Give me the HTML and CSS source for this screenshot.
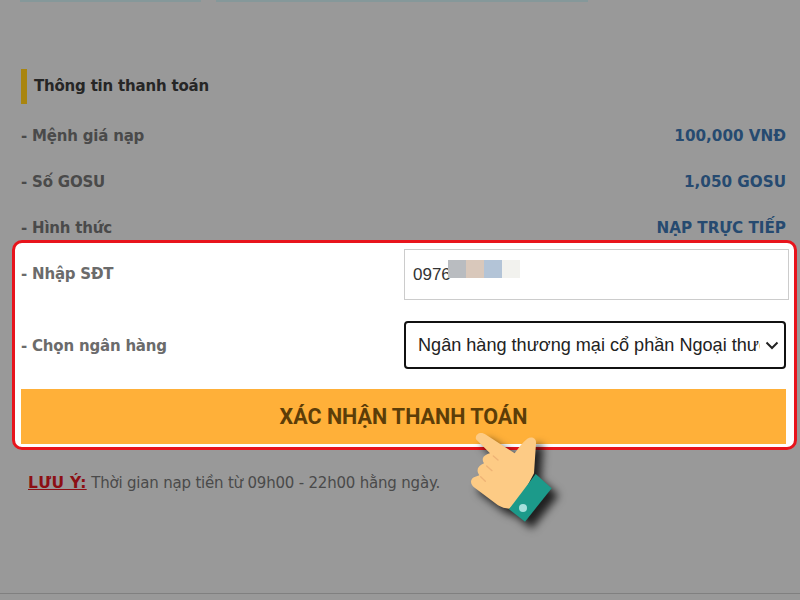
FILE: index.html
```html
<!DOCTYPE html>
<html lang="vi">
<head>
    <meta charset="UTF-8">
    <meta name="viewport" content="width=device-width, initial-scale=1.0">
    <title>Thông tin thanh toán</title>
    <link rel="stylesheet" href="styles.css">
</head>
<body>
    <div class="top-lines">
        <span class="top-line-a"></span>
        <span class="top-line-b"></span>
    </div>

    <h2 class="title">Thông tin thanh toán</h2>

    <div class="row"><span>- Mệnh giá nạp</span><span class="value">100,000 VNĐ</span></div>
    <div class="row"><span>- Số GOSU</span><span class="value">1,050 GOSU</span></div>
    <div class="row"><span>- Hình thức</span><span class="value">NẠP TRỰC TIẾP</span></div>

    <form class="panel">
        <div class="field field-phone">
            <label for="sdt">- Nhập SĐT</label>
            <div class="phone-wrap">
                <input type="text" id="sdt" value="0976">
                <!-- phan so bi che -->
                <div class="blur">
                    <span class="blur-a"></span>
                    <span class="blur-b"></span>
                    <span class="blur-c"></span>
                    <span class="blur-d"></span>
                </div>
            </div>
        </div>
        <div class="field field-bank">
            <label for="bank">- Chọn ngân hàng</label>
            <div class="select-wrap">
                <select id="bank">
                    <option>Ngân hàng thương mại cổ phần Ngoại thương Việt Nam</option>
                </select>
                <svg class="chevron" viewBox="0 0 14 9" aria-hidden="true">
                    <path d="M1.5 1.5 L7 7 L12.5 1.5"/>
                </svg>
            </div>
        </div>
        <button type="button">XÁC NHẬN THANH TOÁN</button>
    </form>

    <p class="note"><b>LƯU Ý:</b> Thời gian nạp tiền từ 09h00 - 22h00 hằng ngày.</p>

    <div class="bottom-rule"></div>

    <svg class="hand" viewBox="0 0 390 330" aria-hidden="true">
        <path class="skin" d="M108 58 C104 42 122 32 138 44 L224 100 C236 84 248 66 262 56 C274 48 290 54 288 70 L282 160 L240 240 L208 266 C196 266 184 262 174 256 L102 202 C90 192 90 178 102 172 L118 166 C108 152 112 138 132 130 C124 118 128 106 150 100 Z"/>
        <path class="crease" d="M160 108 L174 120 M140 138 L156 152 M122 170 L136 184"/>
        <polygon class="cuff" points="287,162 335,205 255,305 207,268"/>
        <circle class="cuff-btn" cx="249" cy="264" r="12"/>
    </svg>
</body>
</html>
```

FILE: styles.css
```css
body {
    font-family: "DejaVu Sans", Tahoma, sans-serif;
    margin: 0;
    width: 800px;
    height: 600px;
    overflow: hidden;
    background-color: #999999;
    position: relative;
}
.top-lines {
    display: flex;
    gap: 15px;
    height: 2px;
    padding-left: 20px;
}
.top-line-a, .top-line-b {
    background-color: #85989a;
}
.top-line-a {
    width: 181px;
}
.top-line-b {
    width: 372px;
}
.title {
    margin: 67px 0 21px 21px;
    height: 35px;
    line-height: 35px;
    padding-left: 7px;
    border-left: 6px solid #a9850f;
    font-size: 15px;
    letter-spacing: -0.2px;
    font-weight: bold;
    color: #262626;
}
.row {
    display: flex;
    justify-content: space-between;
    height: 22px;
    line-height: 22px;
    margin: 0 14px 24px 21px;
    font-size: 15px;
    letter-spacing: -0.2px;
    font-weight: bold;
    color: #4a4a4a;
}
.value {
    font-size: 15.2px;
    letter-spacing: 0;
    color: #264a70;
}
.panel {
    margin: -23px 3px 0 12px;
    height: 210px;
    box-sizing: border-box;
    padding: 6px 8px 3px 6px;
    border: 3px solid #e8141c;
    border-radius: 10px;
    background-color: #ffffff;
}
.field {
    display: grid;
    grid-template-columns: 383px 1fr;
    align-items: center;
    font-size: 15px;
    letter-spacing: -0.2px;
    font-weight: bold;
    color: #6b6b6b;
}
.field-phone {
    margin-right: -3px;
    margin-bottom: 21px;
}
.field-phone label {
    padding-bottom: 2px;
}
.field-bank {
    margin-bottom: 20px;
}
.field-bank label {
    padding-top: 2px;
}
.phone-wrap, .select-wrap {
    position: relative;
}
#sdt {
    display: block;
    width: 100%;
    height: 51px;
    box-sizing: border-box;
    padding: 0 8px;
    border: 1px solid #cccccc;
    font-family: "Liberation Sans", Arial, sans-serif;
    font-size: 17px;
    color: #333333;
}
.blur {
    position: absolute;
    left: 44px;
    top: 11px;
    display: flex;
}
.blur span {
    width: 18px;
    height: 18px;
}
.blur-a { background-color: #b9bcc0; }
.blur-b { background-color: #d9c8bb; }
.blur-c { background-color: #b3c4d7; }
.blur-d { background-color: #f2f2ee; }
#bank {
    display: block;
    width: 100%;
    height: 48px;
    box-sizing: border-box;
    padding: 0 24px 0 12px;
    border: 2px solid #111111;
    border-radius: 4px;
    background-color: #ffffff;
    appearance: none;
    font-family: "Liberation Sans", Arial, sans-serif;
    font-size: 18.1px;
    color: #222222;
}
.chevron {
    position: absolute;
    right: 7px;
    top: 20px;
    width: 14px;
    height: 9px;
    pointer-events: none;
}
.chevron path {
    fill: none;
    stroke: #222222;
    stroke-width: 2;
}
button {
    display: block;
    width: 100%;
    height: 55px;
    border: none;
    background-color: #ffb039;
    font-family: "Roboto", Arial, sans-serif;
    font-size: 21.5px;
    font-weight: bold;
    color: #5c3d08;
}
.note {
    margin: 21px 0 0 28px;
    line-height: 24px;
    font-size: 15px;
    letter-spacing: -0.2px;
    color: #4a4a4a;
}
.note b {
    font-size: 15.5px;
    letter-spacing: 0.3px;
    color: #8c0f14;
    text-decoration: underline;
}
.bottom-rule {
    height: 1px;
    margin-top: 98px;
    background-color: #808080;
}
.hand {
    position: absolute;
    left: 440px;
    top: 420px;
    width: 130px;
    height: 110px;
    overflow: visible;
    filter: drop-shadow(7px 7px 4px rgba(0, 0, 0, 0.8));
}
.skin {
    fill: #fdcb85;
}
.crease {
    fill: none;
    stroke: #eeb376;
    stroke-width: 4;
    stroke-linecap: round;
}
.cuff {
    fill: #1c9a8a;
}
.cuff-btn {
    fill: #a6e0dc;
}
```
